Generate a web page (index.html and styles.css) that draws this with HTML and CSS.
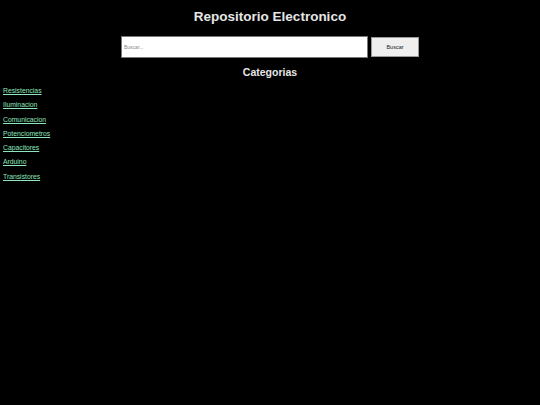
FILE: index.html
```html
<!DOCTYPE html>
<html lang="es">
<head>
<meta charset="utf-8">
<title>Repositorio Electronico</title>
<link rel="stylesheet" href="styles.css">
</head>
<body>
<header class="header">
  <h1 class="title">Repositorio Electronico</h1>
  <form class="search">
    <input class="search-input" type="text" placeholder="Buscar...">
    <button class="search-button" type="button">Buscar</button>
  </form>
  <h2 class="subtitle">Categorias</h2>
</header>
<nav class="categories">
  <a class="cat-link" href="#">Resistencias</a>
  <a class="cat-link" href="#">Iluminacion</a>
  <a class="cat-link" href="#">Comunicacion</a>
  <a class="cat-link" href="#">Potenciometros</a>
  <a class="cat-link" href="#">Capacitores</a>
  <a class="cat-link" href="#">Arduino</a>
  <a class="cat-link" href="#">Transistores</a>
</nav>
</body>
</html>
```
FILE: styles.css
```css
html, body {
  margin: 0;
  padding: 0;
  background: #000;
  font-family: "Liberation Sans", Arial, sans-serif;
}
body {
  padding: 0 3px;
}
.header {
  display: flex;
  flex-direction: column;
  align-items: center;
}
.title {
  margin: 8px 0 0;
  font-size: 13.5px;
  line-height: 17px;
  font-weight: bold;
  color: #e6e6e6;
}
.search {
  display: flex;
  align-items: center;
  gap: 3px;
  margin-top: 11px;
}
.search-input {
  box-sizing: border-box;
  width: 247px;
  height: 22px;
  margin: 0;
  padding: 0 2px;
  border: 1px solid #777;
  background: #fff;
  font-family: "Liberation Sans", Arial, sans-serif;
  font-size: 5px;
  color: #333;
}
.search-input::placeholder {
  color: #888;
}
.search-button {
  box-sizing: border-box;
  width: 48px;
  height: 20px;
  margin: 0;
  padding: 0;
  border: 1px solid #999;
  background: #efefef;
  font-family: "Liberation Sans", Arial, sans-serif;
  font-size: 5.5px;
  color: #222;
}
.subtitle {
  margin: 7px 0 0;
  font-size: 10.5px;
  line-height: 14px;
  font-weight: bold;
  color: #e6e6e6;
}
.categories {
  display: flex;
  flex-direction: column;
  align-items: flex-start;
  gap: 6px;
  margin-top: 8px;
}
.cat-link {
  font-size: 6.8px;
  line-height: 8.3px;
  color: #8fe6bc;
  text-decoration: underline;
}
```
